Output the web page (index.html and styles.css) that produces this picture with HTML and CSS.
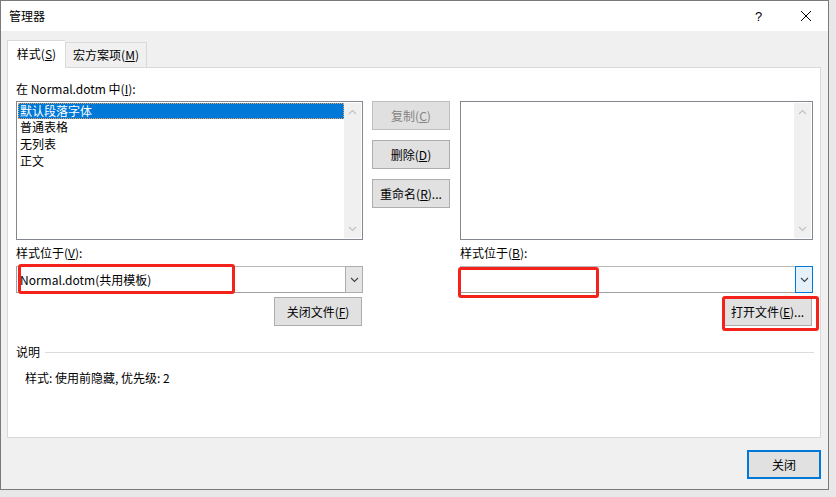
FILE: index.html
```html
<!DOCTYPE html>
<html lang="zh-CN">
<head>
<meta charset="utf-8">
<title>管理器</title>
<link rel="stylesheet" href="styles.css">
</head>
<body>
<div class="window">
  <div class="titlebar">
    <span class="title">管理器</span>
    <span class="help">?</span>
    <span class="close-x"><svg width="12" height="12" viewBox="0 0 12 12"><path d="M1 1L11 11M11 1L1 11" stroke="#000" stroke-width="1" fill="none"/></svg></span>
  </div>
  <div class="client">
    <div class="tabs">
      <div class="tab active">样式(<u>S</u>)</div>
      <div class="tab">宏方案项(<u>M</u>)</div>
    </div>
    <div class="panel">
      <div class="cols">
        <div class="col side">
          <div class="label">在 Normal.dotm 中(<u>I</u>):</div>
          <div class="listbox">
            <div class="items">
              <div class="item selected">默认段落字体</div>
              <div class="item">普通表格</div>
              <div class="item">无列表</div>
              <div class="item">正文</div>
            </div>
            <div class="vscroll">
              <svg width="9" height="6" viewBox="0 0 9 6"><path d="M1 5L4.5 1.5L8 5" stroke="#c2c2c2" stroke-width="1.2" fill="none"/></svg>
              <svg width="9" height="6" viewBox="0 0 9 6"><path d="M1 1L4.5 4.5L8 1" stroke="#c2c2c2" stroke-width="1.2" fill="none"/></svg>
            </div>
          </div>
          <div class="label lbl2">样式位于(<u>V</u>):</div>
          <div class="combo">
            <span class="combo-text">Normal.dotm(共用模板)</span>
            <span class="drop"><svg width="9" height="6" viewBox="0 0 9 6"><path d="M1 1L4.5 4.5L8 1" stroke="#404040" stroke-width="1.1" fill="none"/></svg></span>
            <span class="mark mark-left"></span>
          </div>
          <div class="btnrow"><button class="btn btn-close-file">关闭文件(<u>F</u>)</button></div>
        </div>
        <div class="col mid">
          <button class="btn disabled">复制(<u>C</u>)</button>
          <button class="btn">删除(<u>D</u>)</button>
          <button class="btn">重命名(<u>R</u>)...</button>
        </div>
        <div class="col side right">
          <div class="label">&nbsp;</div>
          <div class="listbox">
            <div class="items"></div>
            <div class="vscroll">
              <svg width="9" height="6" viewBox="0 0 9 6"><path d="M1 5L4.5 1.5L8 5" stroke="#c2c2c2" stroke-width="1.2" fill="none"/></svg>
              <svg width="9" height="6" viewBox="0 0 9 6"><path d="M1 1L4.5 4.5L8 1" stroke="#c2c2c2" stroke-width="1.2" fill="none"/></svg>
            </div>
          </div>
          <div class="label lbl2">样式位于(<u>B</u>):</div>
          <div class="combo">
            <span class="combo-text"></span>
            <span class="drop hot"><svg width="9" height="6" viewBox="0 0 9 6"><path d="M1 1L4.5 4.5L8 1" stroke="#404040" stroke-width="1.1" fill="none"/></svg></span>
            <span class="mark mark-right"></span>
          </div>
          <div class="btnrow"><button class="btn btn-open-file">打开文件(<u>E</u>)...<span class="mark mark-btn"></span></button></div>
        </div>
      </div>
      <div class="desc-head">
        <span class="desc-title">说明</span>
        <span class="desc-line"></span>
      </div>
      <div class="desc-text">样式: 使用前隐藏, 优先级: 2</div>
    </div>
    <div class="footer">
      <button class="btn default">关闭</button>
    </div>
  </div>
</div>
</body>
</html>
```

FILE: styles.css
```css
* { box-sizing: border-box; }
html, body { margin: 0; padding: 0; }
body {
  width: 836px;
  height: 497px;
  background: #e8e8e8;
  font-family: "Noto Sans CJK SC", "Noto Sans", sans-serif;
  font-size: 12px;
  color: #000;
  overflow: hidden;
}
u { text-decoration: underline; text-underline-offset: 1px; }

.window {
  width: 829px;
  height: 490px;
  border: 1px solid #7a7a7a;
  background: #f0f0f0;
  display: flex;
  flex-direction: column;
}
.titlebar {
  height: 30px;
  background: #fff;
  display: flex;
  align-items: center;
  flex: none;
}
.title { margin-left: 8px; font-size: 12px; line-height: 16px; flex: 1; }
.help { width: 14px; margin-right: 31px; font-family: "Liberation Sans", sans-serif; font-size: 13px; }
.close-x { width: 12px; height: 12px; margin-right: 16px; display: flex; }

.client { flex: 1; display: flex; flex-direction: column; padding: 9px 0 0 6px; }

.tabs { display: flex; align-items: flex-end; height: 27px; position: relative; z-index: 1; }
.tab {
  height: 25px;
  padding: 0 6px;
  line-height: 24px;
  border: 1px solid #d9d9d9;
  border-bottom: none;
  background: #f0f0f0;
  width: 82px;
  text-align: center;
}
.tab.active {
  height: 28px;
  width: 58px;
  background: #fff;
  line-height: 26px;
  margin-bottom: -1px;
  border-right: none;
}

.panel {
  width: 814px;
  height: 371px;
  background: #fff;
  border: 1px solid #d9d9d9;
  padding: 13px 6px 0 8px;
}
.cols { display: flex; }
.col { display: flex; flex-direction: column; }
.side { width: 347px; }
.side.right { width: 353px; margin-left: 10px; }
.mid { width: 78px; margin-left: 9px; padding-top: 20px; gap: 10px; }

.label { height: 16px; line-height: 16px; margin-bottom: 4px; white-space: nowrap; }
.lbl2 { margin-top: 5px; margin-bottom: 5px; }

.listbox {
  height: 139px;
  border: 1px solid #828790;
  display: flex;
  padding: 1px;
}
.items { flex: 1; }
.item { height: 17px; line-height: 16px; padding-left: 2px; }
.item.selected {
  height: 16px;
  background: #0078d7;
  color: #fff;
  outline: 1px dotted #e8a060;
  outline-offset: -1px;
}
.vscroll {
  width: 17px;
  background: #f0f0f0;
  display: flex;
  flex-direction: column;
  justify-content: space-between;
  align-items: center;
  padding: 6px 0 6px;
}

.combo {
  position: relative;
  height: 27px;
  border: 1px solid #a0a0a0;
  border-top-color: #b9b9b9;
  background: #fff;
  display: flex;
  align-items: center;
}
.combo-text { flex: 1; padding-left: 3px; font-size: 12px; line-height: 16px; white-space: nowrap; }
.drop {
  width: 18px;
  height: 27px;
  margin: -1px -1px -1px 0;
  border: 1px solid #adadad;
  background: #e5e5e5;
  display: flex;
  align-items: center;
  justify-content: center;
}
.drop.hot { border-color: #0078d7; background: #e5f1fb; }

.mark {
  position: absolute;
  border: 3px solid #f5221b;
  border-radius: 3px;
  pointer-events: none;
}
.mark-left { left: 1px; top: -3px; width: 217px; height: 30px; }
.mark-right { left: -3px; top: 0px; width: 141px; height: 31px; }
.mark-btn { left: -2px; top: -2px; width: 97px; height: 35px; }

.btnrow { display: flex; justify-content: flex-end; margin-top: 4px; }
.btn {
  font-family: inherit;
  font-size: 12px;
  color: #000;
  height: 29px;
  border: 1px solid #adadad;
  background: #e1e1e1;
  padding: 0;
  line-height: 16px;
  margin: 0;
  position: relative;
}
.btn.disabled { color: #838383; border-color: #bfbfbf; background: #e0e0e0; }
.btn-close-file { width: 88px; margin-right: 1px; }
.btn-open-file { width: 89px; margin-right: 1px; }

.desc-head { display: flex; align-items: center; margin-top: 18px; height: 16px; }
.desc-title { line-height: 16px; }
.desc-line { flex: 1; height: 1px; background: #dcdcdc; margin-left: 5px; }
.desc-text { margin-top: 10px; margin-left: 9px; line-height: 16px; }

.footer { display: flex; justify-content: flex-end; padding: 12px 7px 0 0; }
.btn.default { width: 74px; border: 2px solid #0078d7; }
```
